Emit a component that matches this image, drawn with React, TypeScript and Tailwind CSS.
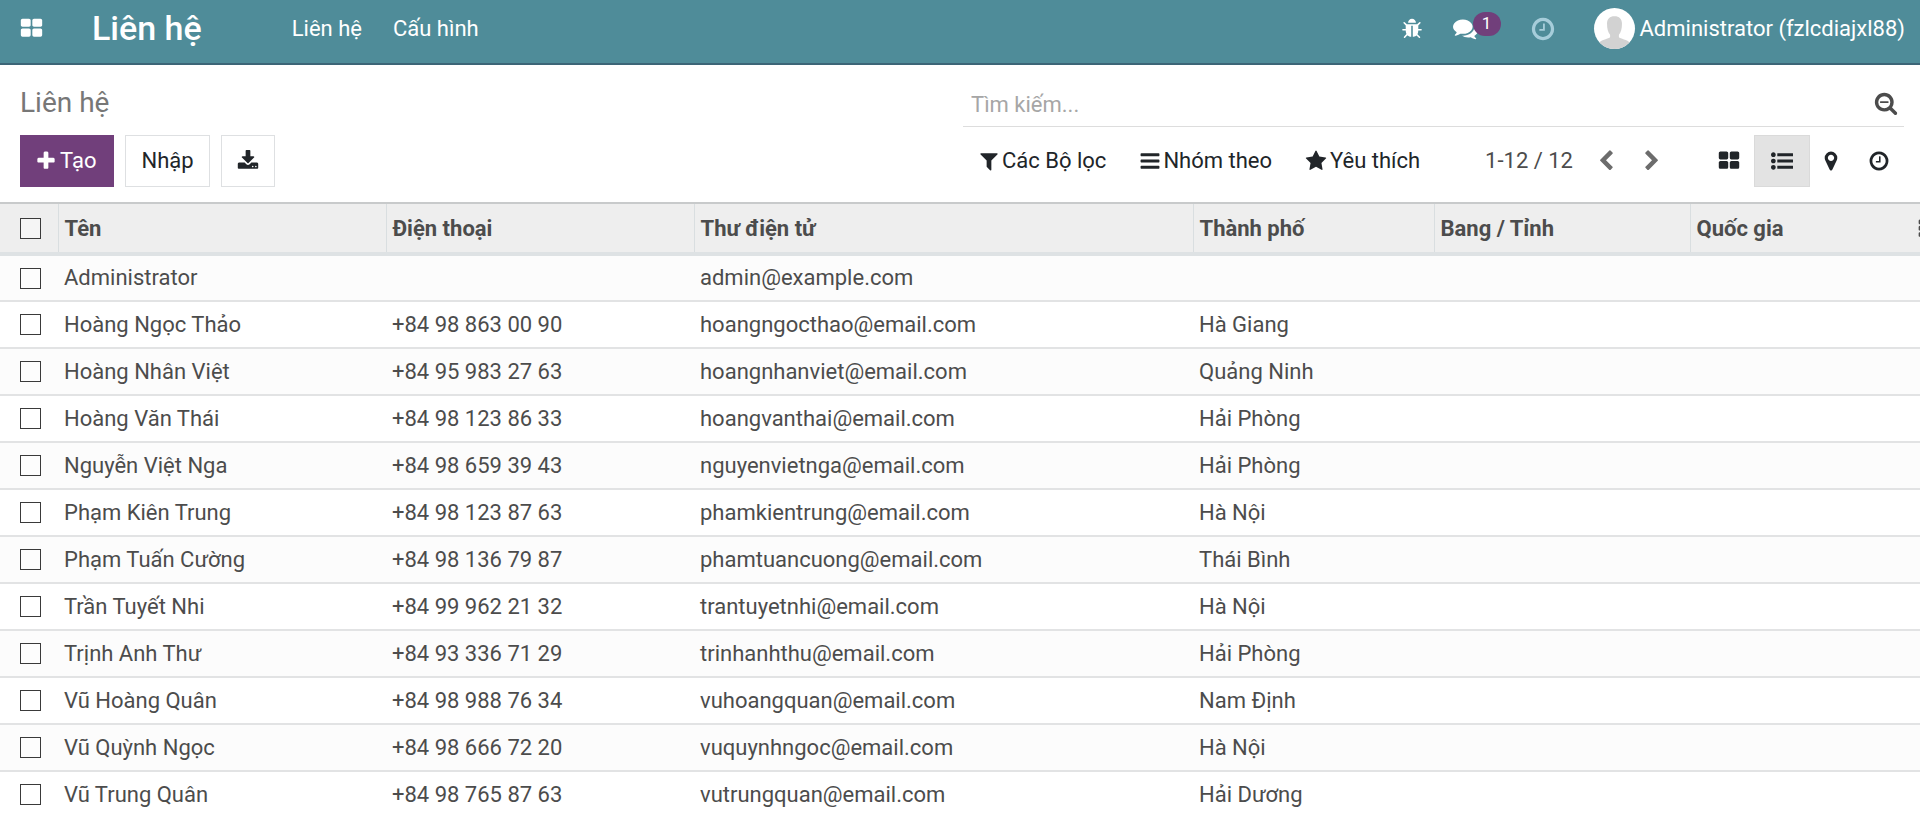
import React from "react";

const paths = {
  thLarge:
    "M832 1024v384q0 52-38 90t-90 38h-512q-52 0-90-38t-38-90v-384q0-52 38-90t90-38h512q52 0 90 38t38 90zm0-768v384q0 52-38 90t-90 38h-512q-52 0-90-38t-38-90v-384q0-52 38-90t90-38h512q52 0 90 38t38 90zm896 768v384q0 52-38 90t-90 38h-512q-52 0-90-38t-38-90v-384q0-52 38-90t90-38h512q52 0 90 38t38 90zm0-768v384q0 52-38 90t-90 38h-512q-52 0-90-38t-38-90v-384q0-52 38-90t90-38h512q52 0 90 38t38 90z",
  clock:
    "M1024 544v448q0 14-9 23t-23 9h-320q-14 0-23-9t-9-23v-64q0-14 9-23t23-9h224v-352q0-14 9-23t23-9h64q14 0 23 9t9 23zm416 352q0-148-73-273t-198-198-273-73-273 73-198 198-73 273 73 273 198 198 273 73 273-73 198-198 73-273zm224 0q0 209-103 385.5t-279.5 279.5-385.5 103-385.5-103-279.5-279.5-103-385.5 103-385.5 279.5-279.5 385.5-103 385.5 103 279.5 279.5 103 385.5z",
  searchMinus:
    "M1088 800v64q0 13-9.5 22.5t-22.5 9.5h-576q-13 0-22.5-9.5t-9.5-22.5v-64q0-13 9.5-22.5t22.5-9.5h576q13 0 22.5 9.5t9.5 22.5zm128 32q0-185-131.5-316.5t-316.5-131.5-316.5 131.5-131.5 316.5 131.5 316.5 316.5 131.5 316.5-131.5 131.5-316.5zm512 832q0 53-37.5 90.5t-90.5 37.5q-54 0-90-38l-343-342q-179 124-399 124-143 0-273.5-55.5t-225-150-150-225-55.5-273.5 55.5-273.5 150-225 225-150 273.5-55.5 273.5 55.5 225 150 150 225 55.5 273.5q0 220-124 399l343 343q37 37 37 90z",
  plus: "M1600 736v192q0 40-28 68t-68 28h-416v416q0 40-28 68t-68 28h-192q-40 0-68-28t-28-68v-416h-416q-40 0-68-28t-28-68v-192q0-40 28-68t68-28h416v-416q0-40 28-68t68-28h192q40 0 68 28t28 68v416h416q40 0 68 28t28 68z",
  download:
    "M1344 1344q0-26-19-45t-45-19-45 19-19 45 19 45 45 19 45-19 19-45zm256 0q0-26-19-45t-45-19-45 19-19 45 19 45 45 19 45-19 19-45zm128-224v320q0 40-28 68t-68 28h-1472q-40 0-68-28t-28-68v-320q0-40 28-68t68-28h465l135 136q58 56 136 56t136-56l136-136h464q40 0 68 28t28 68zm-325-569q17 41-14 70l-448 448q-18 19-45 19t-45-19l-448-448q-31-29-14-70 17-39 59-39h256v-448q0-26 19-45t45-19h256q26 0 45 19t19 45v448h256q42 0 59 39z",
  filter:
    "M1595 295q17 41-14 70l-493 493v742q0 42-39 59-13 5-25 5-27 0-45-19l-256-256q-19-19-19-45v-486l-493-493q-31-29-14-70 17-39 59-39h1280q42 0 59 39z",
  bars: "M1664 1344v128q0 26-19 45t-45 19h-1408q-26 0-45-19t-19-45v-128q0-26 19-45t45-19h1408q26 0 45 19t19 45zm0-512v128q0 26-19 45t-45 19h-1408q-26 0-45-19t-19-45v-128q0-26 19-45t45-19h1408q26 0 45 19t19 45zm0-512v128q0 26-19 45t-45 19h-1408q-26 0-45-19t-19-45v-128q0-26 19-45t45-19h1408q26 0 45 19t19 45z",
  star: "M1728 647q0 22-26 48l-363 354 86 500q1 7 1 20 0 21-10.5 35.5t-30.5 14.5q-19 0-40-12l-449-236-449 236q-22 12-40 12-21 0-31.5-14.5t-10.5-35.5q0-6 2-20l86-500-364-354q-25-27-25-48 0-37 56-46l502-73 225-455q19-41 49-41t49 41l225 455 502 73q56 9 56 46z",
  chevronLeft:
    "M1427 301l-531 531 531 531q19 19 19 45t-19 45l-166 166q-19 19-45 19t-45-19l-742-742q-19-19-19-45t19-45l742-742q19-19 45-19t45 19l166 166q19 19 19 45t-19 45z",
  chevronRight:
    "M1363 877l-742 742q-19 19-45 19t-45-19l-166-166q-19-19-19-45t19-45l531-531-531-531q-19-19-19-45t19-45l166-166q19-19 45-19t45 19l742 742q19 19 19 45t-19 45z",
  listUl:
    "M384 1408q0 80-56 136t-136 56-136-56-56-136 56-136 136-56 136 56 56 136zm0-512q0 80-56 136t-136 56-136-56-56-136 56-136 136-56 136 56 56 136zm1408 416v192q0 13-9.5 22.5t-22.5 9.5h-1216q-13 0-22.5-9.5t-9.5-22.5v-192q0-13 9.5-22.5t22.5-9.5h1216q13 0 22.5 9.5t9.5 22.5zm-1408-928q0 80-56 136t-136 56-136-56-56-136 56-136 136-56 136 56 56 136zm1408 416v192q0 13-9.5 22.5t-22.5 9.5h-1216q-13 0-22.5-9.5t-9.5-22.5v-192q0-13 9.5-22.5t22.5-9.5h1216q13 0 22.5 9.5t9.5 22.5zm0-512v192q0 13-9.5 22.5t-22.5 9.5h-1216q-13 0-22.5-9.5t-9.5-22.5v-192q0-13 9.5-22.5t22.5-9.5h1216q13 0 22.5 9.5t9.5 22.5z",
  mapMarker:
    "M1152 640q0-106-75-181t-181-75-181 75-75 181 75 181 181 75 181-75 75-181zm256 0q0 109-33 179l-364 774q-16 33-47.5 52t-67.5 19-67.5-19-46.5-52l-365-774q-33-70-33-179 0-212 150-362t362-150 362 150 150 362z",
  bug: "M1696 960q0 26-19 45t-45 19h-224q0 171-67 290l208 209q19 19 19 45t-19 45q-18 19-45 19t-45-19l-198-197q-5 5-15 13t-42 28.5-65 36.5-82 29-97 13v-896h-128v896q-51 0-101.5-13.5t-87-33-66-39-43.5-32.5l-15-14-183 207q-20 21-48 21-24 0-43-16-19-18-20.5-44.5t15.5-46.5l202-227q-58-114-58-274h-224q-26 0-45-19t-19-45 19-45 45-19h224v-294l-173-173q-19-19-19-45t19-45 45-19 45 19l173 173h844l173-173q19-19 45-19t45 19 19 45-19 45l-173 173v294h224q26 0 45 19t19 45zm-480-576h-640q0-133 93.5-226.5t226.5-93.5 226.5 93.5 93.5 226.5z",
  comments:
    "M1408 768q0 139-94 257t-256.5 186.5-353.5 68.5q-86 0-176-16-124 88-278 128-36 9-86 16h-3q-11 0-20.5-8t-11.5-21q-1-3-1-6.5t.5-6.5 2-6l2.5-5 3.5-5.5 4-5 4.5-5 4-4.5q5-6 23-25t26-29.5 22.5-29 25-38.5 20.5-44q-124-72-195-177t-71-224q0-139 94-257t256.5-186.5 353.5-68.5 353.5 68.5 256.5 186.5 94 257zm384 256q0 120-71 224.5t-195 176.5q10 24 20.5 44t25 38.5 22.5 29 26 29.5 23 25q1 1 4 4.5t4.5 5 4 5 3.5 5.5l2.5 5 2 6 .5 6.5-1 6.5q-3 14-13 22t-22 7q-50-7-86-16-154-40-278-128-90 16-176 16-271 0-472-132 58 4 88 4 161 0 309-45t264-129q125-92 192-212t67-254q0-77-23-152 129 71 204 178t75 230z",
  ellipsisV:
    "M1088 1248v192q0 40-28 68t-68 28h-192q-40 0-68-28t-28-68v-192q0-40 28-68t68-28h192q40 0 68 28t28 68zm0-512v192q0 40-28 68t-68 28h-192q-40 0-68-28t-28-68v-192q0-40 28-68t68-28h192q40 0 68 28t28 68zm0-512v192q0 40-28 68t-68 28h-192q-40 0-68-28t-28-68v-192q0-40 28-68t68-28h192q40 0 68 28t28 68z",
};

function Icon({ name, className = "size-[22px]" }: { name: keyof typeof paths; className?: string }) {
  return (
    <svg viewBox="0 0 1792 1792" fill="currentColor" aria-hidden="true" className={`shrink-0 ${className}`}>
      <path d={paths[name]} />
    </svg>
  );
}

const contacts = [
  { name: "Administrator", phone: "", email: "admin@example.com", city: "" },
  { name: "Hoàng Ngọc Thảo", phone: "+84 98 863 00 90", email: "hoangngocthao@email.com", city: "Hà Giang" },
  { name: "Hoàng Nhân Việt", phone: "+84 95 983 27 63", email: "hoangnhanviet@email.com", city: "Quảng Ninh" },
  { name: "Hoàng Văn Thái", phone: "+84 98 123 86 33", email: "hoangvanthai@email.com", city: "Hải Phòng" },
  { name: "Nguyễn Việt Nga", phone: "+84 98 659 39 43", email: "nguyenvietnga@email.com", city: "Hải Phòng" },
  { name: "Phạm Kiên Trung", phone: "+84 98 123 87 63", email: "phamkientrung@email.com", city: "Hà Nội" },
  { name: "Phạm Tuấn Cường", phone: "+84 98 136 79 87", email: "phamtuancuong@email.com", city: "Thái Bình" },
  { name: "Trần Tuyết Nhi", phone: "+84 99 962 21 32", email: "trantuyetnhi@email.com", city: "Hà Nội" },
  { name: "Trịnh Anh Thư", phone: "+84 93 336 71 29", email: "trinhanhthu@email.com", city: "Hải Phòng" },
  { name: "Vũ Hoàng Quân", phone: "+84 98 988 76 34", email: "vuhoangquan@email.com", city: "Nam Định" },
  { name: "Vũ Quỳnh Ngọc", phone: "+84 98 666 72 20", email: "vuquynhngoc@email.com", city: "Hà Nội" },
  { name: "Vũ Trung Quân", phone: "+84 98 765 87 63", email: "vutrungquan@email.com", city: "Hải Dương" },
];

const columns = [
  { label: "Tên", width: "w-[328px]" },
  { label: "Điện thoại", width: "w-[308px]" },
  { label: "Thư điện tử", width: "w-[499px]" },
  { label: "Thành phố", width: "w-[241px]" },
  { label: "Bang / Tỉnh", width: "w-[256px]" },
  { label: "Quốc gia", width: "w-[230px]" },
];

function Checkbox({ label }: { label: string }) {
  return (
    <input
      type="checkbox"
      aria-label={label}
      className="block size-[21px] appearance-none border border-[#3a3a3a] bg-white/40 checked:bg-[#713f7b]"
    />
  );
}

function Navbar() {
  return (
    <header className="flex h-[65px] shrink-0 items-center border-b-2 border-[#3c6577] bg-[#4f8c99] pr-[15px] pb-1.5 pl-5 text-white">
      <button aria-label="Ứng dụng" className="flex">
        <Icon name="thLarge" className="size-[23px]" />
      </button>
      <a href="#" className="ml-[49px] pb-0.5 text-[34px] leading-10 font-medium">
        Liên hệ
      </a>
      <nav className="ml-[90px] flex gap-[31px]">
        <a href="#">Liên hệ</a>
        <a href="#">Cấu hình</a>
      </nav>
      <div className="ml-auto flex items-center">
        <button aria-label="Gỡ lỗi" className="flex">
          <Icon name="bug" />
        </button>
        <button aria-label="Tin nhắn" className="relative ml-[30px] flex">
          <Icon name="comments" className="size-[25px]" />
          <span className="absolute -top-1 left-5 flex h-6 w-7 items-center justify-center rounded-full bg-[#713f7b] pb-0.5 text-[17px] leading-6">
            1
          </span>
        </button>
        <button aria-label="Hoạt động" className="ml-[52px] flex text-[#a6cdda]">
          <Icon name="clock" className="size-[26px]" />
        </button>
        <button className="ml-[38px] flex items-center gap-[5px]">
          <svg viewBox="0 0 40 40" aria-hidden="true" className="size-[41px] rounded-full bg-white">
            <path
              d="M20 8c-4.600 0-7.300 2.600-7.300 7.200 0 5.200 1 8.600 3 11v2.300c-1 1.500-8.700 2.200-10.700 5.500v6h30v-6c-2-3.300-9.700-4-10.700-5.500v-2.300c2-2.400 3-5.800 3-11C27.300 10.600 24.600 8 20 8z"
              fill="#d2d2d2"
            />
          </svg>
          <span>Administrator (fzlcdiajxl88)</span>
        </button>
      </div>
    </header>
  );
}

function ControlPanel() {
  return (
    <section className="grid shrink-0 grid-cols-2 gap-x-0.5 pt-3 pr-4 pb-[15px] pl-5 text-[#212529]">
      <h1 className="flex h-[50px] items-center pt-0.5 text-[28px] text-[#777777]">Liên hệ</h1>
      <div className="flex h-[50px] items-center border-b border-[#dddddd] pt-0.5 pr-1.5 pl-2">
        <input
          type="search"
          aria-label="Tìm kiếm"
          placeholder="Tìm kiếm..."
          className="min-w-0 flex-1 bg-transparent pt-1 outline-none placeholder:text-[#a6a6a6]"
        />
        <button aria-label="Tìm kiếm nâng cao" className="flex text-[#4c4c4c]">
          <Icon name="searchMinus" className="size-6" />
        </button>
      </div>

      <div className="mt-2 flex h-[52px] gap-[11px]">
        <button className="flex items-center gap-[3px] bg-[#713f7b] pr-[18px] pl-[15px] text-white">
          <Icon name="plus" />
          Tạo
        </button>
        <button className="border border-[#dee0e2] px-[15px]">Nhập</button>
        <button aria-label="Xuất" className="flex items-center border border-[#dee0e2] px-[15px]">
          <Icon name="download" />
        </button>
      </div>
      <div className="mt-2 flex h-[52px] items-center pl-[15px]">
        <div className="flex gap-[33px]">
          <button className="flex items-center gap-0.5">
            <Icon name="filter" />
            Các Bộ lọc
          </button>
          <button className="flex items-center gap-0.5">
            <Icon name="bars" />
            Nhóm theo
          </button>
          <button className="flex items-center gap-[3px]">
            <Icon name="star" />
            Yêu thích
          </button>
        </div>
        <div className="ml-auto flex items-center text-[#4c4c4c]">
          <span>1-12 / 12</span>
          <button aria-label="Trang trước" className="ml-[22px] flex text-[#6c6c6c]">
            <Icon name="chevronLeft" />
          </button>
          <button aria-label="Trang sau" className="ml-6 flex text-[#6c6c6c]">
            <Icon name="chevronRight" />
          </button>
        </div>
        <div className="ml-[41px] flex h-full">
          <button aria-label="Kanban" className="flex items-center px-3.5">
            <Icon name="thLarge" />
          </button>
          <button aria-label="Danh sách" className="flex items-center border border-[#dadada] bg-[#e3e3e3] px-4">
            <Icon name="listUl" />
          </button>
          <button aria-label="Bản đồ" className="flex items-center px-2.5">
            <Icon name="mapMarker" />
          </button>
          <button aria-label="Hoạt động" className="flex items-center pr-3.5 pl-4">
            <Icon name="clock" />
          </button>
        </div>
      </div>
    </section>
  );
}

export default function App() {
  return (
    <div className="flex h-screen flex-col overflow-hidden bg-white font-[Roboto,sans-serif] text-[22px] leading-7 text-[#4c4c4c]">
      <Navbar />
      <ControlPanel />
      <main className="relative min-h-0 flex-1 overflow-x-hidden overflow-y-auto border-t-2 border-[#c8cacb] [scrollbar-width:none]">
        <table className="w-full table-fixed border-collapse text-left">
          <thead>
            <tr className="h-[50px] border-b-4 border-[#dee2e4] bg-[#eeeeee]">
              <th className="w-[58px] pl-5">
                <Checkbox label="Chọn tất cả" />
              </th>
              {columns.map((column) => (
                <th key={column.label} className={`${column.width} border-l border-[#d9dee0] pt-0.5 pl-1.5 font-bold`}>
                  {column.label}
                </th>
              ))}
            </tr>
          </thead>
          <tbody>
            {contacts.map((contact) => (
              <tr key={contact.name} className="h-[47px] border-b-2 border-[#e2e3e4] odd:bg-[#fcfcfc]">
                <td className="pl-5">
                  <Checkbox label={contact.name} />
                </td>
                <td className="pl-1.5">{contact.name}</td>
                <td className="pl-1.5">{contact.phone}</td>
                <td className="pl-1.5">{contact.email}</td>
                <td className="pl-1.5">{contact.city}</td>
                <td />
                <td />
              </tr>
            ))}
          </tbody>
        </table>
        <button aria-label="Cột tùy chọn" className="absolute top-3.5 -right-3 flex">
          <Icon name="ellipsisV" />
        </button>
      </main>
    </div>
  );
}
